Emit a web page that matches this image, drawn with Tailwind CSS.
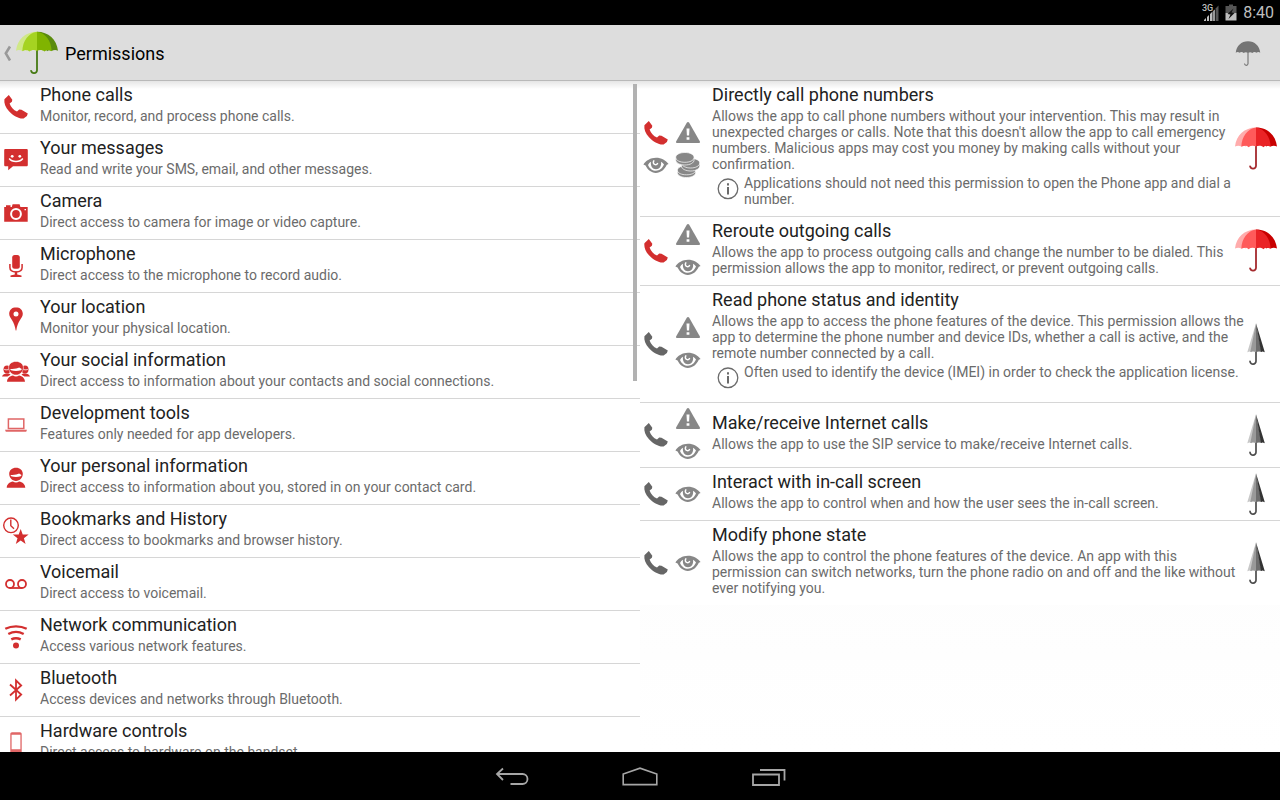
<!DOCTYPE html>
<html lang="en">
<head>
  <meta charset="UTF-8" />
  <meta name="viewport" content="width=device-width, initial-scale=1.0" />
  <title>Permissions</title>
  <script src="https://cdn.jsdelivr.net/npm/@tailwindcss/browser@4"></script>
</head>
<body class="flex flex-col h-screen overflow-hidden bg-white font-['Roboto',sans-serif] text-[#222222]">

  <!-- Shared icons -->
  <svg class="hidden">
    <symbol id="phone" viewBox="0 0 32 32">
      <path fill="currentColor" d="M4.400 8.200 8.800 4 12.300 8.800 11.900 10.800 9.600 12.400C10.800 16 13.500 18.900 17 20.600L19.200 18.600 21.500 18.700 27.800 22.400 26.900 24.900 23.600 27.500C19.500 28.200 13.300 25 9 20.300 5.300 16.200 3.900 12 4.400 8.200Z" />
    </symbol>
    <symbol id="warning" viewBox="0 0 32 32">
      <path fill="currentColor" d="M16 5c.6 0 .9.3 1.200.8L27.900 24.600c.4.8 0 1.400-.8 1.400H4.900c-.8 0-1.200-.6-.8-1.400L14.800 5.800c.3-.5.6-.8 1.200-.8Z" />
      <path fill="#fff" d="M14.500 11.400h3l-.4 7.200h-2.200zM14.600 20.200h2.800v2.600h-2.800z" />
    </symbol>
    <symbol id="eye" viewBox="0 0 32 32">
      <path fill="currentColor" d="M3.400 15.400C6 11.600 10.500 8.800 16 8.800s9.800 2.600 12.600 6.200l-1.800.8c-2.200 4.900-6.200 8.100-11 8.100-4.600 0-8.200-3.100-10.200-7.300z" />
      <path fill="#fff" d="M8 16c.7-1.400 1.700-2.500 3-3.200-.7 4.600 1.600 7.400 5 7.400s5.700-2.800 5-7.400c1.300.7 2.300 1.600 3 2.800-1.600 3.800-4.500 6.200-8 6.200-3.600 0-6.500-2.300-8-5.800z" />
      <path fill="none" stroke="#fff" stroke-width="1.500" stroke-linecap="round" d="M13.800 11.900c-.8 1.200-.6 2.800.8 3.500 1.200.5 2.300.1 2.900-.8" />
    </symbol>
    <symbol id="coins" viewBox="0 0 32 32">
      <g fill="currentColor" stroke="#fff" stroke-width=".7">
        <path d="M5.400 21.500c0-3 4-5 9-5s9.200 2 9.200 5v2.200c0 2.800-4.200 4.800-9.200 4.800s-9-2-9-4.800z" />
        <path fill="none" d="M5.400 21.600c.4 2.600 4.200 4.200 9 4.200s8.800-1.600 9.200-4.200" />
        <path d="M9.400 14c0-2.800 4.200-4.600 9.300-4.600s9.100 1.800 9.100 4.600v2.800c0 2.900-4 5.200-9 5.200s-9.400-2.100-9.400-5z" />
        <path fill="none" d="M9.400 14.200c.6 2.900 4.400 4.800 9.300 4.800s8.700-2 9.100-4.800" />
        <path d="M3.700 8.500c0-2.900 4-5 9.200-5s9.200 2.100 9.200 5v2.400c0 3-4 5.100-9.200 5.100s-9.200-2.100-9.200-5.100z" />
        <path fill="none" d="M3.700 8.700c.5 2.900 4.300 4.600 9.200 4.600s8.700-1.700 9.200-4.600" />
      </g>
    </symbol>
    <symbol id="info" viewBox="0 0 32 32">
      <circle cx="16" cy="16.800" r="9.800" fill="none" stroke="currentColor" stroke-width="1.300" />
      <path fill="currentColor" d="M15 11.200h2v2.200h-2zM15 15h2v7.400h-2z" />
    </symbol>
    <symbol id="umbrella-red" viewBox="0 0 48 48">
      <path fill="none" stroke="#a52a2e" stroke-width="1.800" stroke-linecap="round" d="M24 20v21a3 3 0 0 1-5.900.3" />
      <path fill="#ffacac" d="M3 21.600C4.200 10.300 12.600 2.500 24 2.500L14 21.600c-1.400-1-3-1.100-4.600-.1-2-1.100-4.400-1.100-6.400.1z" />
      <path fill="#c80000" d="M45 21.600C43.800 10.300 35.400 2.500 24 2.500l10 19.100c1.400-1 3-1.100 4.600-.1 2-1.100 4.400-1.100 6.400.1z" />
      <path fill="#ff5a5a" d="M24 2.500C15.500 3.800 9.800 11.300 9.300 21.800c3.500-1.600 5.500-1.200 7.200.4 2.300-1.700 5.100-1.800 7.500-.6z" />
      <path fill="#ea2326" d="M24 2.500c8.500 1.300 14.200 8.800 14.700 19.300-3.500-1.600-5.500-1.200-7.200.4-2.300-1.700-5.100-1.800-7.500-.6z" />
    </symbol>
    <symbol id="umbrella-green" viewBox="0 0 48 48">
      <path fill="none" stroke="#467a13" stroke-width="1.800" stroke-linecap="round" d="M24 20v21.500a3 3 0 0 1-5.900.3" />
      <path fill="#d0e888" d="M3 21.800C4.200 10.500 12.600 2.700 24 2.700L14 22.200c-1.400-1.300-3-1.400-4.600-.1-2-1.300-4.400-1.400-6.400-.3z" />
      <path fill="#5a8b0c" d="M45 21.800C43.800 10.500 35.400 2.700 24 2.700l10 19.500c1.400-1.300 3-1.400 4.600-.1 2-1.300 4.400-1.400 6.400-.3z" />
      <path fill="#a5d321" d="M24 2.700C15.500 4 9.800 11.500 9.300 22.200c3.500-1.800 5.500-1.300 7.200.4 2.300-1.900 5.100-2 7.500-.6z" />
      <path fill="#80b400" d="M24 2.700c8.500 1.300 14.200 8.800 14.700 19.500-3.500-1.800-5.500-1.300-7.200.4-2.300-1.900-5.100-2-7.500-.6z" />
    </symbol>
    <symbol id="umbrella-closed" viewBox="0 0 48 48">
      <path fill="none" stroke="#4d4d4d" stroke-width="1.700" stroke-linecap="round" d="M24 30v11a3 3 0 0 1-6 .3" />
      <path fill="#c8c8c8" d="M24 3.300 15.300 32.200l2.400-.7 2 .8z" />
      <path fill="#999" d="M24 3.300 18.300 32l2.700-.5 3 .5z" />
      <path fill="#6e6e6e" d="M24 3.300V32l3-.5 2.700.5z" />
      <path fill="#333" d="M24 3.300 29 32l1.600-.6 2.200.8z" />
    </symbol>
  </svg>

  <!-- Status bar -->
  <div class="flex h-[25px] shrink-0 items-center justify-end gap-1.5 bg-black pr-1.5 text-[#bebebe]">
    <svg class="h-5 w-[18px]" viewBox="0 0 18 20">
      <text x="1" y="8" font-family="Roboto" font-size="9" font-weight="500" fill="currentColor">3G</text>
      <g fill="currentColor">
        <path d="M3 18v-1l2-2v3zM6 18v-4l2-2v6zM9 18v-7l2.500-2.500V18z" />
        <path fill="#bebebe" d="M12.200 18V8l1.600-1.600V18z" />
        <path fill="#555" d="M14.600 18V5.500L17.500 2.600V18z" />
      </g>
    </svg>
    <svg class="h-5 w-3" viewBox="0 0 12 20">
      <path fill="#555" d="M4 1.500h4v1.500h3.500V10H.5V3H4z" />
      <path fill="#bebebe" d="M.5 10h11v7.500H.5z" />
      <path fill="#111" d="M8.500 5.500 2.500 11 5.500 11.500 3.500 16 9.500 10 6.500 9.500z" />
    </svg>
    <time class="text-base leading-none">8:40</time>
  </div>

  <!-- Action bar -->
  <header class="flex h-14 shrink-0 items-center border-b border-[#b9b9b9] bg-[#dddddd] text-black">
    <button class="flex items-center pl-[3px]" aria-label="Navigate up">
      <svg class="h-4 w-2.5" viewBox="0 0 10 16">
        <path fill="none" stroke="#999" stroke-width="2.600" d="M7 1.500 2.800 8.300 7 15.500" />
      </svg>
      <svg class="size-12"><use href="#umbrella-green" /></svg>
    </button>
    <h1 class="ml-1 pt-0.5 text-lg">Permissions</h1>
    <button class="ml-auto mr-[18px]" aria-label="Show all">
      <svg class="size-7" viewBox="0 0 48 48">
        <path fill="none" stroke="#777" stroke-width="2" stroke-linecap="round" d="M24 20v22.500a3 3 0 0 1-5.900.3" />
        <path fill="#747474" d="M3 23.500C4.200 11.500 12.600 3.700 24 3.700s19.800 7.800 21 19.800c-2-1.500-4.500-1.500-6.500 0-2-1.500-5-1.500-7 .3-2.300-1.600-5-1.700-7.500-.3-2.500-1.400-5.200-1.300-7.500.3-2-1.800-5-1.800-7-.3-2-1.500-4.500-1.500-6.500 0z" />
      </svg>
    </button>
  </header>

  <main class="relative grid min-h-0 flex-1 grid-cols-2">
    <div class="absolute inset-x-0 top-0 h-2 bg-gradient-to-b from-black/10 to-transparent"></div>

    <!-- Permission groups -->
    <nav class="relative min-h-0 overflow-hidden" aria-label="Permission groups">
      <ul class="divide-y divide-[#d6d6d6]">
        <li>
          <a href="#" class="flex items-center gap-2 text-[#d32f2f]">
            <svg class="size-8 shrink-0"><use href="#phone" /></svg>
            <span class="pt-0.5 pb-[9px]">
              <span class="block text-lg leading-6 text-[#222222]">Phone calls</span>
              <span class="mt-px block text-sm leading-4 text-[#6b6b6b]">Monitor, record, and process phone calls.</span>
            </span>
          </a>
        </li>
        <li>
          <a href="#" class="flex items-center gap-2 text-[#d32f2f]">
            <svg class="size-8 shrink-0" viewBox="0 0 32 32">
              <path fill="currentColor" d="M5.500 5h21c.8 0 1.300.5 1.300 1.300V21c0 .8-.5 1.300-1.300 1.300H13l-4.800 4v-4H5.500c-.8 0-1.300-.5-1.300-1.300V6.300C4.200 5.500 4.700 5 5.500 5z" />
              <circle cx="12.200" cy="12.300" r="1.400" fill="#fff" />
              <circle cx="19.800" cy="12.300" r="1.400" fill="#fff" />
              <path fill="none" stroke="#fff" stroke-width="1.500" d="M9.200 14.500c3 4 10.600 4 13.600 0" />
            </svg>
            <span class="pt-0.5 pb-[9px]">
              <span class="block text-lg leading-6 text-[#222222]">Your messages</span>
              <span class="mt-px block text-sm leading-4 text-[#6b6b6b]">Read and write your SMS, email, and other messages.</span>
            </span>
          </a>
        </li>
        <li>
          <a href="#" class="flex items-center gap-2 text-[#d32f2f]">
            <svg class="size-8 shrink-0" viewBox="0 0 32 32">
              <path fill="currentColor" d="M4.200 10h1.800V8.300h4.500V10h1.300l.8-2.800h7l.8 2.800h7.300v14.800H4.200z" />
              <circle cx="16" cy="17" r="4.900" fill="none" stroke="#fff" stroke-width="2" />
              <path fill="#fff" d="M24.500 12h1.500v1.200h-1.500z" />
            </svg>
            <span class="pt-0.5 pb-[9px]">
              <span class="block text-lg leading-6 text-[#222222]">Camera</span>
              <span class="mt-px block text-sm leading-4 text-[#6b6b6b]">Direct access to camera for image or video capture.</span>
            </span>
          </a>
        </li>
        <li>
          <a href="#" class="flex items-center gap-2 text-[#d32f2f]">
            <svg class="size-8 shrink-0" viewBox="0 0 32 32">
              <rect x="12.200" y="5" width="7.600" height="13.800" rx="2.500" fill="currentColor" />
              <path fill="none" stroke="currentColor" stroke-width="1.500" d="M9.900 14v3.500c0 2.700 2.500 4.400 6.100 4.400s6.100-1.700 6.100-4.400V14" />
              <path fill="currentColor" d="M14.800 21.500h2.400v3l4.300.9v1.500H10.500v-1.500l4.300-.9z" />
            </svg>
            <span class="pt-0.5 pb-[9px]">
              <span class="block text-lg leading-6 text-[#222222]">Microphone</span>
              <span class="mt-px block text-sm leading-4 text-[#6b6b6b]">Direct access to the microphone to record audio.</span>
            </span>
          </a>
        </li>
        <li>
          <a href="#" class="flex items-center gap-2 text-[#d32f2f]">
            <svg class="size-8 shrink-0" viewBox="0 0 32 32">
              <path fill="currentColor" fill-rule="evenodd" d="M16 4.200c-3.900 0-6.800 2.900-6.800 6.500 0 4.600 5.600 7.400 6.500 16.900h.6c.9-9.500 6.500-12.300 6.500-16.900 0-3.600-2.900-6.500-6.800-6.500zm0 4.200a2.500 2.500 0 1 1 0 5 2.500 2.500 0 0 1 0-5z" />
            </svg>
            <span class="pt-0.5 pb-[9px]">
              <span class="block text-lg leading-6 text-[#222222]">Your location</span>
              <span class="mt-px block text-sm leading-4 text-[#6b6b6b]">Monitor your physical location.</span>
            </span>
          </a>
        </li>
        <li>
          <a href="#" class="flex items-center gap-2 text-[#d32f2f]">
            <svg class="size-8 shrink-0" viewBox="0 0 32 32">
              <g fill="currentColor">
                <ellipse cx="7" cy="13.500" rx="3.500" ry="4" />
                <ellipse cx="25" cy="13.500" rx="3.500" ry="4" />
                <path d="M2 20.500c.6-2 2.600-3 5-3 2 0 3 .6 3.500 1.200L7.500 20.500zM30 20.500c-.6-2-2.600-3-5-3-2 0-3 .6-3.500 1.200l3 1.800z" />
              </g>
              <path fill="none" stroke="#fff" stroke-width=".9" d="M4.300 13.400c1.500.6 3 .5 4.200 0M27.700 13.400c-1.500.6-3 .5-4.200 0" />
              <path fill="currentColor" stroke="#fff" stroke-width=".6" d="M8.600 11.500c0-3.600 3.300-6.100 7.400-6.100s7.400 2.500 7.400 6.100c0 4-3.300 7.600-7.400 7.600s-7.400-3.600-7.400-7.600z" />
              <path fill="#fff" d="M10.200 12.900c3.800.3 7.200-.3 9-1.300.8.600 1.600 1 2.600 1.300-.2.500-.5 1-.8 1.400-3 1-7 1-10 0-.3-.4-.6-.9-.8-1.400z" />
              <path fill="currentColor" d="M7 25.700c.2-3.300 2.600-5.500 6-6.100 1.800 1.200 4.200 1.200 6 0 3.400.6 5.800 2.800 6 6.100z" />
            </svg>
            <span class="pt-0.5 pb-[9px]">
              <span class="block text-lg leading-6 text-[#222222]">Your social information</span>
              <span class="mt-px block text-sm leading-4 text-[#6b6b6b]">Direct access to information about your contacts and social connections.</span>
            </span>
          </a>
        </li>
        <li>
          <a href="#" class="flex items-center gap-2 text-[#e06666]">
            <svg class="size-8 shrink-0" viewBox="0 0 32 32">
              <path fill="none" stroke="currentColor" stroke-width="1.500" d="M8.400 10h15.400v9.500H8.400z" />
              <path fill="currentColor" d="M5 20.800h22l-.8 1.900H5.800z" />
            </svg>
            <span class="pt-0.5 pb-[9px]">
              <span class="block text-lg leading-6 text-[#222222]">Development tools</span>
              <span class="mt-px block text-sm leading-4 text-[#6b6b6b]">Features only needed for app developers.</span>
            </span>
          </a>
        </li>
        <li>
          <a href="#" class="flex items-center gap-2 text-[#d32f2f]">
            <svg class="size-8 shrink-0" viewBox="0 0 32 32">
              <path fill="currentColor" d="M9.200 11.800c0-3.600 2.900-6.100 6.800-6.100s6.800 2.500 6.800 6.100c0 3.800-2.900 7.200-6.800 7.200s-6.800-3.400-6.800-7.200z" />
              <path fill="#fff" d="M10.500 12.900c3.600.3 6.900-.3 8.600-1.300.8.600 1.500 1 2.400 1.300-.2.500-.4 1-.7 1.400-3 1-6.600 1-9.600 0-.3-.4-.5-.9-.7-1.400z" />
              <path fill="currentColor" d="M6.700 25.700c.2-3.300 2.700-5.500 6.200-6.100 1.900 1.200 4.300 1.200 6.200 0 3.500.6 6 2.800 6.200 6.100z" />
            </svg>
            <span class="pt-0.5 pb-[9px]">
              <span class="block text-lg leading-6 text-[#222222]">Your personal information</span>
              <span class="mt-px block text-sm leading-4 text-[#6b6b6b]">Direct access to information about you, stored in on your contact card.</span>
            </span>
          </a>
        </li>
        <li>
          <a href="#" class="flex items-center gap-2 text-[#d32f2f]">
            <svg class="size-8 shrink-0" viewBox="0 0 32 32">
              <circle cx="11" cy="10.300" r="7.300" fill="none" stroke="currentColor" stroke-width="1.400" />
              <path fill="none" stroke="currentColor" stroke-width="1.400" d="M10.800 4.500v6.300l3.200 3" />
              <path fill="currentColor" d="m20.700 14 2 5.600h5.900l-4.700 3.700 1.700 5.600-4.900-3.400-4.900 3.400 1.700-5.600-4.700-3.700h5.900z" />
            </svg>
            <span class="pt-0.5 pb-[9px]">
              <span class="block text-lg leading-6 text-[#222222]">Bookmarks and History</span>
              <span class="mt-px block text-sm leading-4 text-[#6b6b6b]">Direct access to bookmarks and browser history.</span>
            </span>
          </a>
        </li>
        <li>
          <a href="#" class="flex items-center gap-2 text-[#d32f2f]">
            <svg class="size-8 shrink-0" viewBox="0 0 32 32">
              <g fill="none" stroke="currentColor" stroke-width="1.800">
                <circle cx="10" cy="16" r="4" />
                <circle cx="22" cy="16" r="4" />
                <path d="M10 20h12" />
              </g>
            </svg>
            <span class="pt-0.5 pb-[9px]">
              <span class="block text-lg leading-6 text-[#222222]">Voicemail</span>
              <span class="mt-px block text-sm leading-4 text-[#6b6b6b]">Direct access to voicemail.</span>
            </span>
          </a>
        </li>
        <li>
          <a href="#" class="flex items-center gap-2 text-[#d32f2f]">
            <svg class="size-8 shrink-0" viewBox="0 0 32 32">
              <g fill="none" stroke="currentColor" stroke-width="2.400">
                <path d="M5.300 7.800c6.400-3.200 15-3.200 21.400 0" />
                <path d="M8.300 13c4.600-2.500 10.800-2.500 15.400 0" />
                <path d="M11.300 18.400c2.900-1.500 6.500-1.500 9.400 0" />
              </g>
              <circle cx="16" cy="24.600" r="3" fill="currentColor" />
            </svg>
            <span class="pt-0.5 pb-[9px]">
              <span class="block text-lg leading-6 text-[#222222]">Network communication</span>
              <span class="mt-px block text-sm leading-4 text-[#6b6b6b]">Access various network features.</span>
            </span>
          </a>
        </li>
        <li>
          <a href="#" class="flex items-center gap-2 text-[#d32f2f]">
            <svg class="size-8 shrink-0" viewBox="0 0 32 32">
              <path fill="none" stroke="currentColor" stroke-width="1.800" d="m10 10.500 11.200 10L16 25.700V6.300l5.200 5.200-11.200 10" />
            </svg>
            <span class="pt-0.5 pb-[9px]">
              <span class="block text-lg leading-6 text-[#222222]">Bluetooth</span>
              <span class="mt-px block text-sm leading-4 text-[#6b6b6b]">Access devices and networks through Bluetooth.</span>
            </span>
          </a>
        </li>
        <li>
          <a href="#" class="flex items-center gap-2 text-[#e06666]">
            <svg class="size-8 shrink-0" viewBox="0 0 32 32">
              <path fill="currentColor" fill-rule="evenodd" d="M12 5.300h8c1 0 1.700.7 1.700 1.700v18c0 1-.7 1.700-1.700 1.700h-8c-1 0-1.700-.7-1.700-1.700V7c0-1 .7-1.700 1.700-1.700zm-.4 2.500v14.400h8.800V7.800z" />
            </svg>
            <span class="pt-0.5 pb-[9px]">
              <span class="block text-lg leading-6 text-[#222222]">Hardware controls</span>
              <span class="mt-px block text-sm leading-4 text-[#6b6b6b]">Direct access to hardware on the handset.</span>
            </span>
          </a>
        </li>
      </ul>
      <div class="absolute top-[3px] right-[3px] h-[297px] w-1 bg-[#b2b2b2]"></div>
    </nav>

    <!-- Permissions of the selected group -->
    <section class="min-h-0 overflow-hidden bg-gradient-to-b from-[#f8f8f8] to-white">
      <ul class="divide-y divide-[#d6d6d6] bg-white">
        <li class="flex items-center">
          <div class="grid shrink-0 grid-cols-2 text-[#878787]">
            <svg class="size-8 text-[#d32f2f]"><use href="#phone" /></svg>
            <svg class="size-8"><use href="#warning" /></svg>
            <svg class="size-8"><use href="#eye" /></svg>
            <svg class="size-8"><use href="#coins" /></svg>
          </div>
          <div class="ml-2 -mr-3 flex-1 pt-0.5 pb-[9px]">
            <h2 class="text-lg leading-6">Directly call phone numbers</h2>
            <p class="mt-px text-sm leading-4 text-[#6b6b6b]">Allows the app to call phone numbers without your intervention. This may result in unexpected charges or calls. Note that this doesn't allow the app to call emergency numbers. Malicious apps may cost you money by making calls without your confirmation.</p>
            <div class="flex text-[#6b6b6b]">
              <svg class="size-8 shrink-0"><use href="#info" /></svg>
              <p class="pt-[3px] text-sm leading-4">Applications should not need this permission to open the Phone app and dial a number.</p>
            </div>
          </div>
          <svg class="size-12 shrink-0"><use href="#umbrella-red" /></svg>
        </li>
        <li class="flex items-center">
          <div class="flex shrink-0 items-center text-[#878787]">
            <svg class="size-8 text-[#d32f2f]"><use href="#phone" /></svg>
            <div>
              <svg class="size-8"><use href="#warning" /></svg>
              <svg class="size-8"><use href="#eye" /></svg>
            </div>
          </div>
          <div class="ml-2 -mr-3 flex-1 pt-0.5 pb-[9px]">
            <h2 class="text-lg leading-6">Reroute outgoing calls</h2>
            <p class="mt-px text-sm leading-4 text-[#6b6b6b]">Allows the app to process outgoing calls and change the number to be dialed. This permission allows the app to monitor, redirect, or prevent outgoing calls.</p>
          </div>
          <svg class="size-12 shrink-0"><use href="#umbrella-red" /></svg>
        </li>
        <li class="flex items-center">
          <div class="flex shrink-0 items-center text-[#878787]">
            <svg class="size-8 text-[#666666]"><use href="#phone" /></svg>
            <div>
              <svg class="size-8"><use href="#warning" /></svg>
              <svg class="size-8"><use href="#eye" /></svg>
            </div>
          </div>
          <div class="ml-2 -mr-3 flex-1 pt-0.5 pb-[9px]">
            <h2 class="text-lg leading-6">Read phone status and identity</h2>
            <p class="mt-px text-sm leading-4 text-[#6b6b6b]">Allows the app to access the phone features of the device. This permission allows the app to determine the phone number and device IDs, whether a call is active, and the remote number connected by a call.</p>
            <div class="flex text-[#6b6b6b]">
              <svg class="size-8 shrink-0"><use href="#info" /></svg>
              <p class="pt-[3px] text-sm leading-4">Often used to identify the device (IMEI) in order to check the application license.</p>
            </div>
          </div>
          <svg class="size-12 shrink-0"><use href="#umbrella-closed" /></svg>
        </li>
        <li class="flex items-center">
          <div class="flex shrink-0 items-center text-[#878787]">
            <svg class="size-8 text-[#666666]"><use href="#phone" /></svg>
            <div>
              <svg class="size-8"><use href="#warning" /></svg>
              <svg class="size-8"><use href="#eye" /></svg>
            </div>
          </div>
          <div class="ml-2 -mr-3 flex-1 pt-0.5 pb-[9px]">
            <h2 class="text-lg leading-6">Make/receive Internet calls</h2>
            <p class="mt-px text-sm leading-4 text-[#6b6b6b]">Allows the app to use the SIP service to make/receive Internet calls.</p>
          </div>
          <svg class="size-12 shrink-0"><use href="#umbrella-closed" /></svg>
        </li>
        <li class="flex items-center">
          <div class="flex shrink-0 items-center text-[#878787]">
            <svg class="size-8 text-[#666666]"><use href="#phone" /></svg>
            <svg class="size-8"><use href="#eye" /></svg>
          </div>
          <div class="ml-2 -mr-3 flex-1 pt-0.5 pb-[9px]">
            <h2 class="text-lg leading-6">Interact with in-call screen</h2>
            <p class="mt-px text-sm leading-4 text-[#6b6b6b]">Allows the app to control when and how the user sees the in-call screen.</p>
          </div>
          <svg class="size-12 shrink-0"><use href="#umbrella-closed" /></svg>
        </li>
        <li class="flex items-center">
          <div class="flex shrink-0 items-center text-[#878787]">
            <svg class="size-8 text-[#666666]"><use href="#phone" /></svg>
            <svg class="size-8"><use href="#eye" /></svg>
          </div>
          <div class="ml-2 -mr-3 flex-1 pt-0.5 pb-[9px]">
            <h2 class="text-lg leading-6">Modify phone state</h2>
            <p class="mt-px text-sm leading-4 text-[#6b6b6b]">Allows the app to control the phone features of the device. An app with this permission can switch networks, turn the phone radio on and off and the like without ever notifying you.</p>
          </div>
          <svg class="size-12 shrink-0"><use href="#umbrella-closed" /></svg>
        </li>
      </ul>
    </section>
  </main>

  <!-- System navigation -->
  <footer class="flex h-12 shrink-0 items-center justify-center bg-black pt-0.5 text-[#a6a6a6]">
    <button class="flex w-32 justify-center" aria-label="Back">
      <svg class="h-5 w-9" viewBox="0 0 36 20" fill="none" stroke="currentColor" stroke-width="1.800">
        <path d="M3 7h25.500a5 5 0 0 1 0 10H16.500M9 1.500 3 7l6 6" />
      </svg>
    </button>
    <button class="flex w-32 justify-center" aria-label="Home">
      <svg class="h-5 w-9" viewBox="0 0 36 20" fill="none" stroke="currentColor" stroke-width="1.600">
        <path d="M1.200 17.600V7L18 1.200 34.800 7v10.600z" />
      </svg>
    </button>
    <button class="flex w-32 justify-center" aria-label="Recent apps">
      <svg class="h-5 w-9" viewBox="0 0 36 20" fill="none" stroke="currentColor" stroke-width="1.800">
        <path d="M3 7.500h26V18H3zM10 3h24.500v10.500" />
      </svg>
    </button>
  </footer>
</body>
</html>
